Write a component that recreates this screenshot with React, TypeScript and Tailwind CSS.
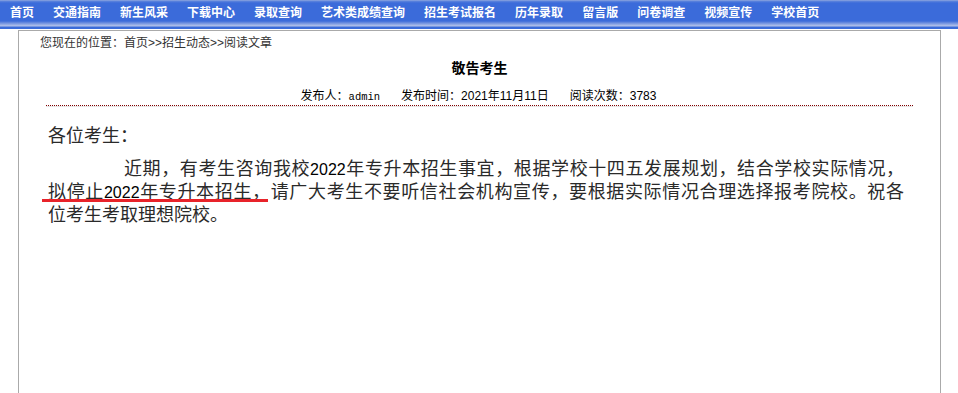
import React from "react";

const navItems = [
  "首页",
  "交通指南",
  "新生风采",
  "下载中心",
  "录取查询",
  "艺术类成绩查询",
  "招生考试报名",
  "历年录取",
  "留言版",
  "问卷调查",
  "视频宣传",
  "学校首页",
];

const cjk = "font-['Liberation_Sans','Noto_Sans_CJK_SC',sans-serif]";

function Num({ children }: { children: React.ReactNode }) {
  return (
    <span className="font-['Liberation_Sans',sans-serif] text-[16px] text-black">
      {children}
    </span>
  );
}

export default function App() {
  return (
    <div className={`w-[958px] h-[393px] overflow-hidden bg-white ${cjk}`}>
      {/* nav bar */}
      <div className="h-[29px] bg-[linear-gradient(to_bottom,#9aaedf_0px,#5f86dc_1px,#3b6bda_3px,#3b6bda_21px,#6e8fdf_23px,#b6c4ea_26px,#3a6bd9_27px,#3a6bd9_29px)]">
        <div className="flex h-[26px] items-center gap-[19px] pl-[10px]">
          {navItems.map((t) => (
            <span
              key={t}
              className="text-[12px] font-bold leading-[16px] text-white whitespace-nowrap"
            >
              {t}
            </span>
          ))}
        </div>
      </div>

      {/* content box */}
      <div className="ml-[18px] mt-[1px] w-[923px] h-[400px] border border-b-0 border-[#aaaaaa]">
        <div className="pl-[21px] pt-[4px] text-[12px] leading-[16px] text-[#333]">
          您现在的位置：首页&gt;&gt;招生动态&gt;&gt;阅读文章
        </div>

        <div className="mx-[27px]">
          <div className="mt-[7px] text-center text-[14px] font-bold leading-[20px] text-black">
            敬告考生
          </div>
          <div className="mt-[11px] flex justify-center gap-[21px] text-[12px] leading-[15px] text-black border-b border-dotted border-[#800000] pr-[2px]">
            <span>
              发布人：
              <span className="font-['Liberation_Mono',monospace] text-[10.5px]">
                admin
              </span>
            </span>
            <span>发布时间：2021年11月11日</span>
            <span>阅读次数：3783</span>
          </div>
          <div className="h-[1px] bg-[#e6e6e6]" />

          <div className="pl-[2px] pr-[9px] text-[18px] leading-[22px] text-[#2a2a2a]">
            <div className="mt-[18px]">各位考生：</div>
            <div className="mt-[11px]">
              <div className="pl-[76px] text-justify [text-align-last:justify] whitespace-nowrap">
                近期，有考生咨询我校<Num>2022</Num>
                年专升本招生事宜，根据学校十四五发展规划，结合学校实际情况，
              </div>
              <div className="relative text-justify [text-align-last:justify]">
                拟停止<Num>2022</Num>
                年专升本招生，请广大考生不要听信社会机构宣传，要根据实际情况合理选择报考院校。祝各
                <div className="absolute left-[-6px] top-[18px] h-[3px] w-[226px] bg-[#e8232a]" />
              </div>
              <div>位考生考取理想院校。</div>
            </div>
          </div>
        </div>
      </div>
    </div>
  );
}
